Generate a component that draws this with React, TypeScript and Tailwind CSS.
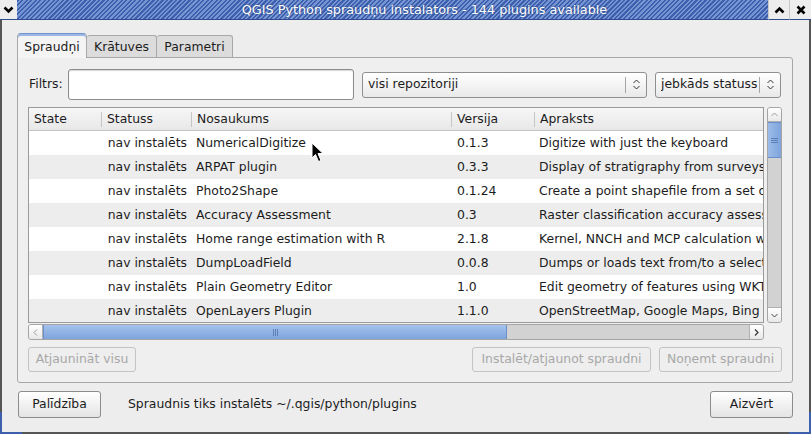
import React from "react";

const plugins: [string, string, string][] = [
  ["NumericalDigitize", "0.1.3", "Digitize with just the keyboard"],
  ["ARPAT plugin", "0.3.3", "Display of stratigraphy from surveys. Arpat"],
  ["Photo2Shape", "0.1.24", "Create a point shapefile from a set of geotagged images"],
  ["Accuracy Assessment", "0.3", "Raster classification accuracy assessment"],
  ["Home range estimation with R", "2.1.8", "Kernel, NNCH and MCP calculation with R"],
  ["DumpLoadField", "0.0.8", "Dumps or loads text from/to a selected field"],
  ["Plain Geometry Editor", "1.0", "Edit geometry of features using WKT"],
  ["OpenLayers Plugin", "1.1.0", "OpenStreetMap, Google Maps, Bing Maps layers"],
];

const cols = "grid grid-cols-[72px_90px_260px_83px_1fr]";

function UpDown() {
  return (
    <svg width="7" height="11" viewBox="0 0 7 11" className="shrink-0">
      <polyline points="0.5,4 3.5,1 6.5,4" fill="none" stroke="#333" strokeWidth="1" />
      <polyline points="0.5,7 3.5,10 6.5,7" fill="none" stroke="#333" strokeWidth="1" />
    </svg>
  );
}

function Combo({ label, width }: { label: string; width: string }) {
  return (
    <div
      className={`flex h-[26px] ${width} items-center rounded-[3px] border border-[#8f8f8f] bg-gradient-to-b from-white to-[#e9e9e9] pl-[5px]`}
    >
      <span className="flex-1 truncate">{label}</span>
      <span className="h-[16px] w-px bg-[#a5a5a5]" />
      <span className="flex w-[20px] justify-center">
        <UpDown />
      </span>
    </div>
  );
}

function Button({ children, disabled, className = "" }: { children: React.ReactNode; disabled?: boolean; className?: string }) {
  return (
    <div
      className={`flex items-center justify-center whitespace-nowrap rounded-[3px] border ${
        disabled
          ? "border-[#c3c3c3] bg-[#eeeeee] text-[#a8a8a8]"
          : "border-[#8c8c8c] bg-gradient-to-b from-white to-[#e4e4e4] text-[#1c1c1c]"
      } ${className}`}
    >
      {children}
    </div>
  );
}

function TitleButton({ children, className = "" }: { children: React.ReactNode; className?: string }) {
  return (
    <div className={`flex items-center justify-center border-b border-[#2c4a8c] bg-[#ededed] ${className}`}>
      {children}
    </div>
  );
}

function TitleBar() {
  return (
    <div className="flex h-[20px] shrink-0">
      <TitleButton className="w-[17px]">
        <svg width="11" height="8" viewBox="0 0 11 8">
          <polyline points="1.5,1.5 5.5,5.5 9.5,1.5" fill="none" stroke="#000" strokeWidth="2.6" />
        </svg>
      </TitleButton>
      <div className="flex flex-1 items-center justify-center border-b border-[#2c4a8c] bg-[image:repeating-linear-gradient(135deg,#3c60ad_0px,#3c60ad_1.6px,#7895d3_1.6px,#7895d3_3.2px)] pl-[64px] font-['DejaVu_Sans',sans-serif] text-[12.8px] text-white [text-shadow:0_0_2px_#1f3a78]">
        QGIS Python spraudņu instalators - 144 plugins available
      </div>
      <TitleButton className="w-[21px] border-l border-l-[#c8c8c8]">
        <svg width="11" height="8" viewBox="0 0 11 8">
          <polyline points="1.5,6.5 5.5,2.5 9.5,6.5" fill="none" stroke="#000" strokeWidth="2.6" />
        </svg>
      </TitleButton>
      <TitleButton className="w-[22px] border-l border-l-[#c8c8c8]">
        <svg width="10" height="10" viewBox="0 0 10 10">
          <path d="M1.5 1.5 L8.5 8.5 M8.5 1.5 L1.5 8.5" stroke="#000" strokeWidth="2.6" />
        </svg>
      </TitleButton>
    </div>
  );
}

function Tabs() {
  return (
    <div className="flex h-[24px] items-end">
      <div className="relative z-10 flex h-[25px] w-[70px] items-center justify-center self-start rounded-t-[4px] border border-b-0 border-[#a8a8a8] border-t-[#6f93cf] bg-[#f4f4f4] shadow-[inset_0_2px_0_#9cb7e2] pt-[2px]">
        Spraudņi
      </div>
      <div className="flex h-[22px] w-[70px] items-center justify-center rounded-t-[3px] border border-b-0 border-l-0 border-[#a8a8a8] bg-[#dcdcdc] pt-[2px]">
        Krātuves
      </div>
      <div className="flex h-[22px] w-[76px] items-center justify-center rounded-t-[3px] border border-b-0 border-l-0 border-[#a8a8a8] bg-[#dcdcdc] pt-[2px]">
        Parametri
      </div>
    </div>
  );
}

function Table() {
  const head = ["State", "Statuss", "Nosaukums", "Versija", "Apraksts"];
  return (
    <div className="h-[216px] w-[736px] overflow-hidden border border-[#9a9a9a] bg-white">
      <div className={`${cols} h-[23px] border-b border-[#c4c4c4] bg-gradient-to-b from-[#f6f6f6] to-[#e8e8e8]`}>
        {head.map((h, i) => (
          <div key={h} className="flex items-center pt-px">
            {i > 0 && <span className="h-[15px] w-px bg-[#c6c6c6]" />}
            <span className="pl-[5px]">{h}</span>
          </div>
        ))}
      </div>
      {plugins.map(([name, ver, desc], i) => (
        <div key={name} className={`${cols} h-[24px] items-center pt-px ${i % 2 ? "bg-[#ededed]" : "bg-white"}`}>
          <div />
          <div className="whitespace-nowrap pr-[4px] text-right">nav instalēts</div>
          <div className="pl-[5px]">{name}</div>
          <div className="pl-[6px]">{ver}</div>
          <div className="overflow-hidden whitespace-nowrap pl-[5px]">{desc}</div>
        </div>
      ))}
    </div>
  );
}

function Grip({ vertical }: { vertical?: boolean }) {
  return vertical ? (
    <svg width="7" height="7" viewBox="0 0 7 7">
      <path d="M0 1.5 H7 M0 3.5 H7 M0 5.5 H7" stroke="#5d7fb8" strokeWidth="1" />
    </svg>
  ) : (
    <svg width="7" height="7" viewBox="0 0 7 7">
      <path d="M1.5 0 V7 M3.5 0 V7 M5.5 0 V7" stroke="#5d7fb8" strokeWidth="1" />
    </svg>
  );
}

function VScroll() {
  return (
    <div className="flex h-[216px] w-[15px] flex-col overflow-hidden rounded-[3px] border border-[#a5a5a5] bg-[#d2d2d2]">
      <div className="flex h-[14px] items-center justify-center border-b border-[#b0b0b0] bg-gradient-to-b from-white to-[#e8e8e8]">
        <svg width="7" height="5" viewBox="0 0 7 5">
          <polyline points="0.5,4 3.5,1 6.5,4" fill="none" stroke="#9a9a9a" strokeWidth="1" />
        </svg>
      </div>
      <div className="flex h-[36px] items-center justify-center border-y border-[#6b8fc9] bg-gradient-to-r from-[#9cbce9] to-[#7ea4dc]">
        <Grip vertical />
      </div>
      <div className="flex-1" />
      <div className="flex h-[15px] items-center justify-center border-t border-[#b0b0b0] bg-gradient-to-b from-white to-[#e8e8e8]">
        <svg width="7" height="5" viewBox="0 0 7 5">
          <polyline points="0.5,1 3.5,4 6.5,1" fill="none" stroke="#444" strokeWidth="1" />
        </svg>
      </div>
    </div>
  );
}

function HScroll() {
  return (
    <div className="flex h-[16px] w-[736px] overflow-hidden rounded-[3px] border border-[#a5a5a5] bg-[#d2d2d2]">
      <div className="flex w-[14px] items-center justify-center border-r border-[#b0b0b0] bg-gradient-to-b from-white to-[#e8e8e8]">
        <svg width="5" height="7" viewBox="0 0 5 7">
          <polyline points="4,0.5 1,3.5 4,6.5" fill="none" stroke="#9a9a9a" strokeWidth="1" />
        </svg>
      </div>
      <div className="flex w-[464px] items-center justify-center border-x border-[#6b8fc9] bg-gradient-to-b from-[#a4c2ec] to-[#7ea4dc]">
        <Grip />
      </div>
      <div className="flex-1" />
      <div className="flex w-[14px] items-center justify-center border-l border-[#b0b0b0] bg-gradient-to-b from-white to-[#e8e8e8]">
        <svg width="5" height="7" viewBox="0 0 5 7">
          <polyline points="1,0.5 4,3.5 1,6.5" fill="none" stroke="#333" strokeWidth="1.2" />
        </svg>
      </div>
    </div>
  );
}

export default function App() {
  return (
    <div className="relative flex h-[434px] w-[811px] flex-col overflow-hidden bg-[#ededed] font-['DejaVu_Sans',sans-serif] text-[12.4px] text-[#1c1c1c]">
      <TitleBar />
      <div className="flex flex-1 flex-col border-x-2 border-b-2 border-x-[#555] border-b-[#555] pl-[15px] pr-[16px] pt-[13px]">
        <Tabs />
        <div className="flex h-[326px] flex-col rounded-[3px] rounded-tl-none border border-[#a8a8a8] bg-[#efefef] px-[10px] pb-[10px] pt-[11px]">
          <div className="flex h-[31px] items-center">
            <span className="w-[40px] pl-[1px]">Filtrs:</span>
            <div className="h-[31px] w-[286px] rounded-[3px] border border-[#8c8c8c] bg-white shadow-[inset_0_1px_1px_#d8d8d8]" />
            <div className="ml-[8px]">
              <Combo label="visi repozitoriji" width="w-[285px]" />
            </div>
            <div className="ml-[8px]">
              <Combo label="jebkāds statuss" width="w-[126px]" />
            </div>
          </div>
          <div className="mt-[7px] flex gap-[3px]">
            <Table />
            <VScroll />
          </div>
          <div className="mt-[1px]">
            <HScroll />
          </div>
          <div className="mt-[7px] flex h-[25px] gap-[8px]">
            <Button disabled className="w-[108px]">Atjaunināt visu</Button>
            <div className="flex-1" />
            <Button disabled className="w-[179px]">Instalēt/atjaunot spraudni</Button>
            <Button disabled className="w-[123px]">Noņemt spraudni</Button>
          </div>
        </div>
        <div className="mt-[8px] flex h-[27px] items-center">
          <Button className="ml-[1px] h-[27px] w-[83px]">Palīdzība</Button>
          <span className="ml-[27px] flex-1">Spraudnis tiks instalēts ~/.qgis/python/plugins</span>
          <Button className="h-[27px] w-[83px]">Aizvērt</Button>
        </div>
      </div>
      <div className="absolute bottom-0 left-0 h-[22px] w-[2px] bg-[#3c60ad]" />
      <div className="absolute bottom-0 left-0 h-[2px] w-[22px] bg-[#3c60ad]" />
      <div className="absolute bottom-0 right-0 h-[22px] w-[2px] bg-[#3c60ad]" />
      <div className="absolute bottom-0 right-0 h-[2px] w-[22px] bg-[#3c60ad]" />
      <svg className="absolute left-[311px] top-[142px]" width="14" height="22" viewBox="0 0 14 22">
        <path d="M1 1 L1 16 L4.5 12.5 L7.5 19.5 L10 18.5 L7 11.5 L12 11.5 Z" fill="#000" stroke="#fff" strokeWidth="1" />
      </svg>
    </div>
  );
}
